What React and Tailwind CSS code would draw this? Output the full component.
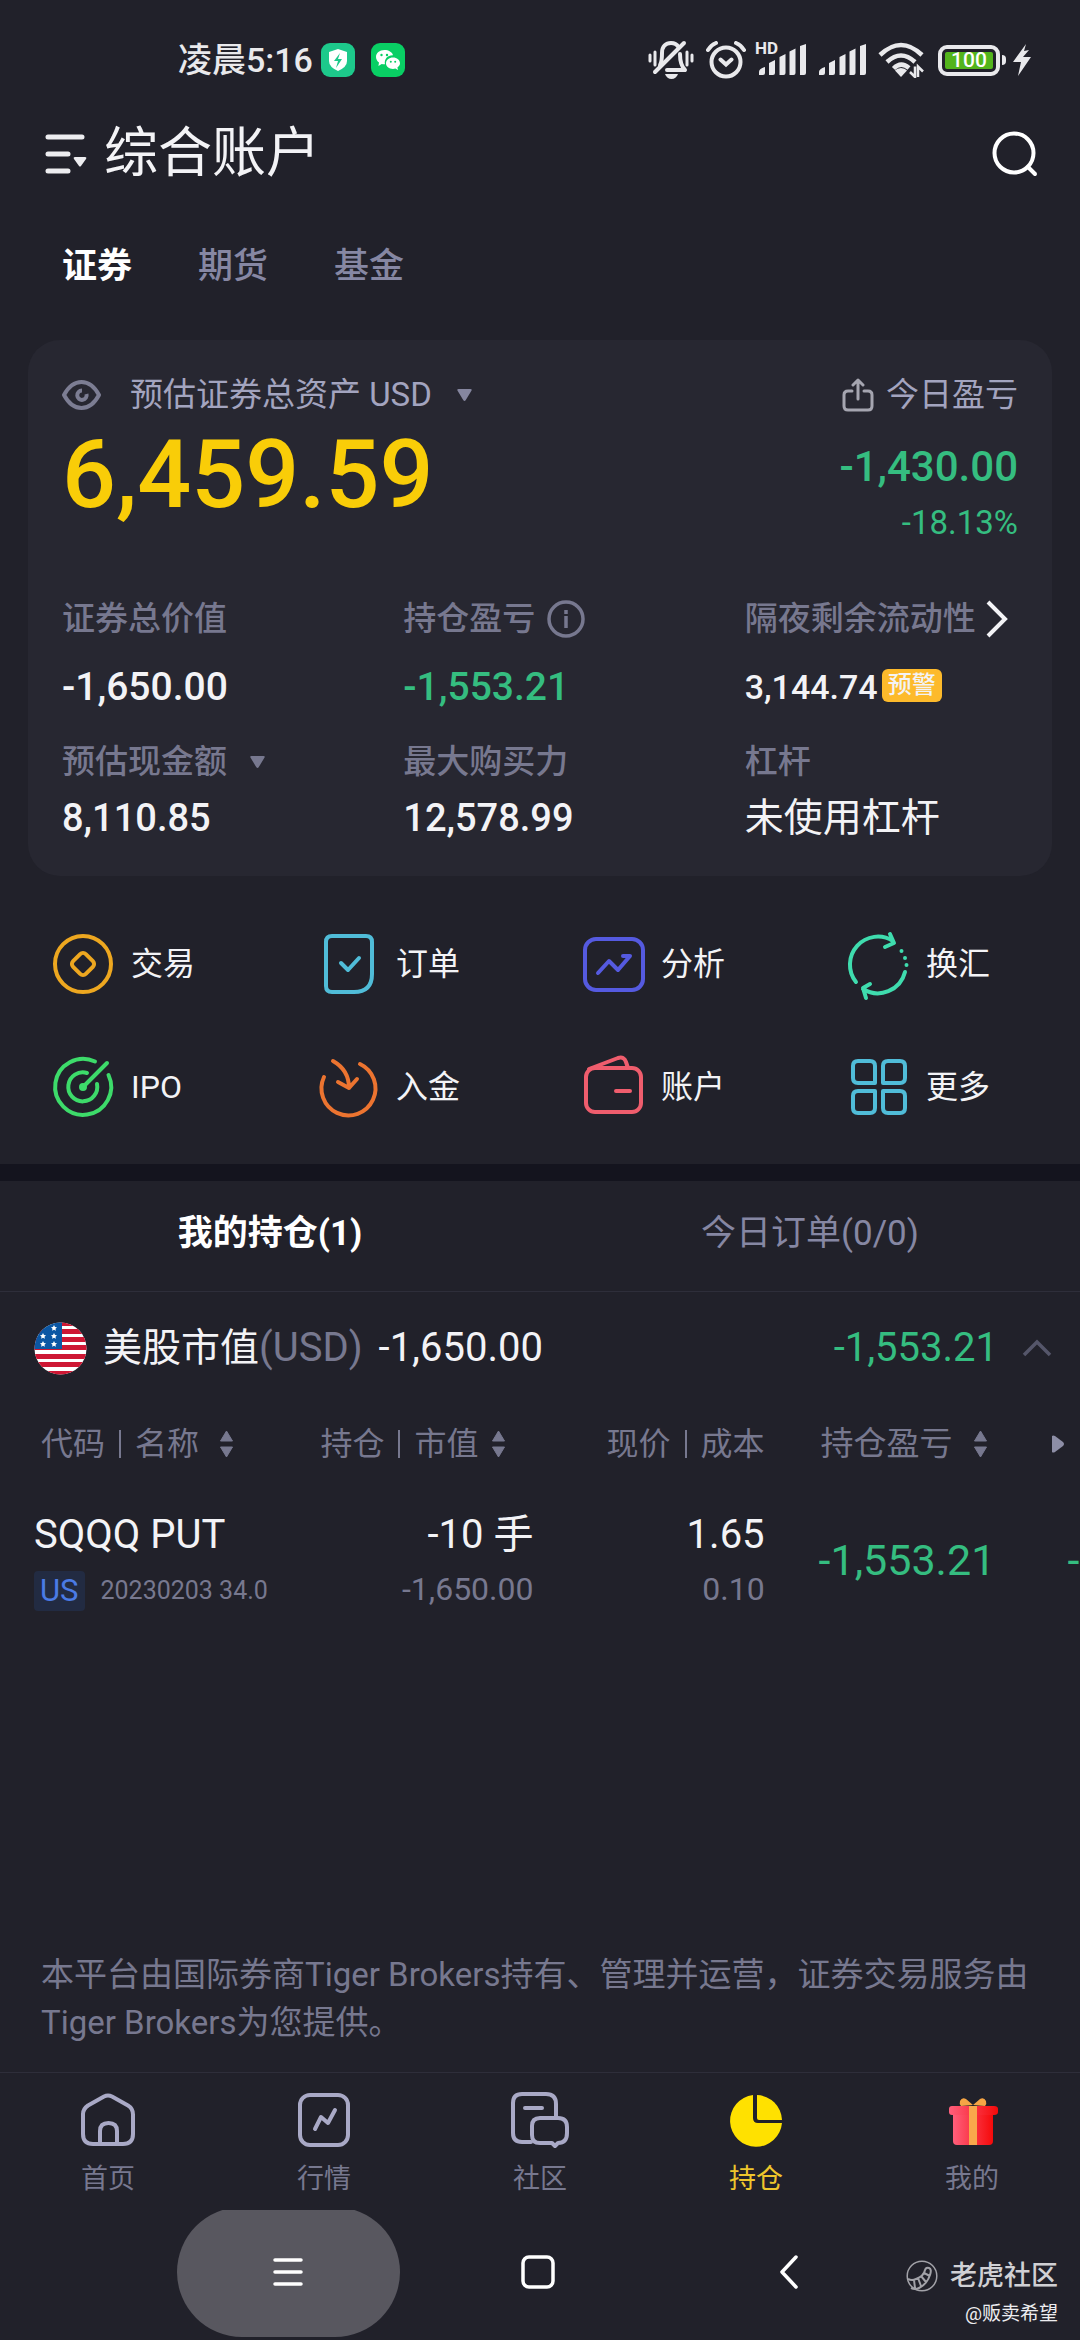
const Seta = ({ className = "" }) => (
  <svg className={className} width="17" height="14" viewBox="0 0 17 14" fill="currentColor">
    <path d="M2.5 1h12q2 0 .9 1.8L9.800 12q-1.300 1.800-2.600 0L1.600 2.800Q.5 1 2.500 1z" />
  </svg>
);

const Ordenar = () => (
  <svg width="15" height="28" viewBox="0 0 14 28" fill="currentColor">
    <path d="M7 1l6 10H1zM7 27L1 17h12z" stroke="currentColor" strokeWidth="1" strokeLinejoin="round" />
  </svg>
);

const Sinal = () => (
  <svg width="48" height="32" viewBox="0 0 48 32" fill="#e9e9ec">
    <path d="M1 31v-3q0-3 6-5v6q0 2-2 2zM11 31V19l6-3v13q0 2-2 2zM21.500 31V13l6-3v19q0 2-2 2zM31.500 31V7.500l6-3V29q0 2-2 2zM42 31V2l6-2v29q0 2-2 2z" />
  </svg>
);

const StatusBar = () => (
  <div className="flex h-[120px] items-center justify-between pr-12 pl-[178px]">
    <div className="flex items-center gap-4 text-[#e9e9ec]">
      <span className="-mr-2 text-[34px] leading-10 font-medium">凌晨5:16</span>
      <svg width="34" height="34" viewBox="0 0 34 34">
        <rect width="34" height="34" rx="9" fill="#1dc98b" />
        <path d="M17 6l9 3v9q0 6-9 10-9-4-9-10V9z" fill="#fff" />
        <path d="M19 10l-6 8h4l-2 7 6-9h-4z" fill="#1dc98b" />
      </svg>
      <svg width="34" height="34" viewBox="0 0 34 34">
        <rect width="34" height="34" rx="9" fill="#09cf64" />
        <path d="M13.500 7C8.500 7 5 10.200 5 14c0 2.200 1.200 4.200 3 5.500L7.400 23l3.300-2q1.800.4 3.300.3c-1.200-5.300 3-9.300 8-9C21.300 9 17.500 7 13.500 7z" fill="#fff" />
        <path d="M22 14.500c-4 0-7 2.600-7 5.800s3 5.700 7 5.700q1.200 0 2.400-.4l2.600 1.500-.6-2.500c1.600-1.200 2.600-2.600 2.600-4.300 0-3.200-3-5.800-7-5.800z" fill="#fff" />
        <g fill="#09cf64">
          <circle cx="10.500" cy="12" r="1.200" />
          <circle cx="16" cy="12" r="1.200" />
          <circle cx="19.800" cy="18.800" r="1" />
          <circle cx="24.200" cy="18.800" r="1" />
        </g>
      </svg>
    </div>

    <div className="flex items-center gap-3">
      <svg width="46" height="40" viewBox="0 0 46 40" fill="none" stroke="#e9e9ec" strokeWidth="4">
        <path d="M2 15v6M7 12v13M39 12v13M44 15v6" strokeWidth="3" strokeLinecap="round" />
        <path d="M12 25c2-3 2-6 2-12C14 6 18 3 23 3c4 0 6 1.500 7.500 4M32 14c0 8 1 12 5 16H19" strokeLinejoin="round" strokeLinecap="round" />
        <path d="M36 3L7 32" strokeLinecap="round" />
        <path d="M17 34h13q-2 5-6.500 5T17 34z" fill="#e9e9ec" stroke="none" />
      </svg>
      <svg width="40" height="38" viewBox="0 0 40 38" fill="none" stroke="#e9e9ec" strokeWidth="4" strokeLinecap="round">
        <circle cx="20" cy="21" r="14.500" />
        <path d="M2 9q3-5 8-7M38 9q-3-5-8-7M14.500 18.500l5.500 5 5.500-5" />
      </svg>
      <div className="relative">
        <Sinal />
        <span className="absolute -top-1 -left-[3px] text-[17px] leading-4 font-bold text-[#e9e9ec]">HD</span>
      </div>
      <Sinal />
      <svg width="48" height="36" viewBox="0 0 48 36" fill="none" stroke="#e9e9ec" strokeWidth="4.500">
        <path d="M2 13Q23-7 44 13M9 20Q23 7 37 20M15.500 26.500Q23 19 31 26" />
        <path d="M23 26q4 0 6 2.500L23 35l-6-6.500q2-2.500 6-2.500z" fill="#e9e9ec" stroke="none" />
        <path d="M37 24.500V35l-5-5M40 35V24.500l5 5" strokeWidth="2.500" />
      </svg>
      <div className="flex items-center gap-[2px]">
        <div className="flex h-[31px] w-[62px] rounded-[9px] border-4 border-[#e9e9ec] p-[3px]">
          <span className="flex w-full items-center justify-center rounded-[2px] bg-[#53b41c] text-[21px] leading-4 font-medium text-white">100</span>
        </div>
        <div className="h-[10px] w-1 rounded-r bg-[#e9e9ec]" />
        <svg className="ml-1" width="20" height="32" viewBox="0 0 20 32" fill="#e9e9ec">
          <path d="M14 0L1 18h8L6 32 19 13h-8l6-7-5 1z" />
        </svg>
      </div>
    </div>
  </div>
);

const acoes = [
  [
    {
      nome: "交易",
      cor: "text-[#eda720]",
      icone: (
        <>
          <circle cx="32" cy="32" r="28" />
          <rect x="23" y="23" width="18" height="18" rx="4" transform="rotate(45 32 32)" />
        </>
      ),
    },
    {
      nome: "订单",
      cor: "text-[#50bcd8]",
      icone: (
        <>
          <path d="M16 4h34q6 0 6 6v32Q56 60 38 60H16q-6 0-6-6V10q0-6 6-6z" />
          <path d="M25 31l7 7 11-12" />
        </>
      ),
    },
    {
      nome: "分析",
      cor: "text-[#555ae0]",
      icone: (
        <>
          <rect x="4" y="7" width="58" height="51" rx="11" />
          <path d="M17 41l11-12 9 9 12-14M42 24h7" />
        </>
      ),
    },
    {
      nome: "换汇",
      cor: "text-[#3fdcae]",
      icone: (
        <>
          <path d="M10 50A28 28 0 0 1 47 9M44 2l4 9-9 4M59 40A28 28 0 0 1 17 57M24 52l-7 4 3 10" />
          <path d="M55.500 19v.1M59 26v.1M60.500 33v.1" />
        </>
      ),
    },
  ],
  [
    {
      nome: "IPO",
      cor: "text-[#3ddb6a]",
      icone: (
        <>
          <path d="M44 6.500A28 28 0 1 0 57.500 20" />
          <path d="M36 18A14.500 14.500 0 1 0 46 29M34 30L56 8" />
          <circle cx="32" cy="32" r="2" fill="currentColor" />
        </>
      ),
    },
    {
      nome: "入金",
      cor: "text-[#ec7430]",
      icone: <path d="M8 22A27 27 0 1 0 44 9M17 6q16 9 16 27M22 27l11 6 8-9" />,
    },
    {
      nome: "账户",
      cor: "text-[#ef5d6d]",
      icone: (
        <>
          <rect x="5" y="13" width="55" height="44" rx="9" />
          <path d="M8 14L37 3q6-2 8 4l2 6M35 36h14" />
        </>
      ),
    },
    {
      nome: "更多",
      cor: "text-[#50bcd8]",
      icone: (
        <path d="M12 6h12q5 0 5 5v17H12q-5 0-5-5V11q0-5 5-5zM42 6h12q5 0 5 5v12q0 5-5 5H37V11q0-5 5-5zM12 36h17v17q0 5-5 5H12q-5 0-5-5V41q0-5 5-5zM37 36h17q5 0 5 5v12q0 5-5 5H42q-5 0-5-5z" />
      ),
    },
  ],
];

const abas = [
  {
    nome: "首页",
    icone: (
      <>
        <path d="M26 6.500q4-2 8 0l16 9q5 3 5 9V44q0 10-10 10H15Q5 54 5 44V24q0-5 5-8.500z" />
        <path d="M22 53V41q0-8 8.500-8T39 41v12" />
      </>
    ),
  },
  {
    nome: "行情",
    icone: (
      <>
        <rect x="6" y="5" width="48" height="50" rx="10" />
        <path d="M21 39l6-12 7 6 7-13" />
      </>
    ),
  },
  {
    nome: "社区",
    icone: (
      <>
        <path d="M21 52H12q-9 0-9-9V13q0-9 9-9h24q10 0 10 10v14" />
        <path d="M30 28h18q9 0 9 9v6q0 10-9 10l-3 3-3-3H30q-8 0-8-8v-9q0-8 8-8zM15 18h17" />
      </>
    ),
  },
  {
    nome: "持仓",
    ativa: true,
    icone: (
      <>
        <path d="M27 5v23q0 5 5 5h24A26 26 0 1 1 27 5z" fill="#ffe100" stroke="none" />
        <path d="M31 5a26 26 0 0 1 25 25H33q-2 0-2-2z" fill="#ffe100" stroke="none" />
      </>
    ),
  },
  {
    nome: "我的",
    icone: (
      <g stroke="none">
        <defs>
          <linearGradient id="caixa">
            <stop offset="0" stopColor="#ff5f7c" />
            <stop offset="1" stopColor="#f50a0a" />
          </linearGradient>
        </defs>
        <path d="M31 15l-7-6q-4-2-6 2-1 3 1 5zM31 15l7-6q4-2 6 2 1 3-1 5z" fill="#f5a545" />
        <path d="M11 24h40v27q0 4-4 4H15q-4 0-4-4z" fill="url(#caixa)" />
        <path d="M10 16h42q4 0 4 3v3q0 3-4 3H10q-3 0-3-3v-3q0-3 3-3z" fill="url(#caixa)" />
        <path d="M27 16h8v39h-8z" fill="#f9a84b" />
      </g>
    ),
  },
];

const rotulo = "flex h-10 items-center text-[33px] leading-10 text-[#77788f]";

const Resumo = () => (
  <section className="mx-7 mt-[51px] rounded-[32px] bg-[#272731] pt-[35px] pb-[34px]">
    <div className="flex justify-between px-[34px]">
      <div>
        <div className="flex h-10 items-center text-[33px] leading-10 text-[#a3a4bf]">
          <button type="button" aria-label="隐藏资产" className="mr-[29px]">
            <svg width="39" height="32" viewBox="0 0 39 32" fill="none" stroke="#7c7d93" strokeWidth="4">
              <path d="M2 16Q9 3 19.500 3T37 16Q30 29 19.500 29T2 16z" strokeLinejoin="round" />
              <path d="M20 11.500a4.700 4.700 0 1 0 4.500 3.500" />
            </svg>
          </button>
          <button type="button" className="flex items-center gap-6">
            预估证券总资产 USD
            <Seta className="text-[#85869f]" />
          </button>
        </div>
        <div className="mt-3 text-[95px] leading-[96px] font-medium text-[#f9cd08]">6,459.59</div>
      </div>
      <div className="text-right text-[#35bd80]">
        <button type="button" className="ml-auto flex h-10 items-center gap-3 text-[33px] leading-10 text-[#a3a4bf]">
          <svg width="32" height="34" viewBox="0 0 32 34" fill="none" stroke="#a5a5b0" strokeWidth="3" strokeLinecap="round" strokeLinejoin="round">
            <path d="M10 13H6q-4 0-4 4v11q0 4 4 4h20q4 0 4-4V17q0-4-4-4h-4M16 21V2M11 7l5-5 5 5" />
          </svg>
          今日盈亏
        </button>
        <div className="mt-7 text-[42px] leading-[48px] font-medium">-1,430.00</div>
        <div className="mt-3 text-[33px] leading-10">-18.13%</div>
      </div>
    </div>

    <div className="mt-14 grid grid-cols-3 text-[39px] leading-[48px] font-medium text-[#f3f3f6]">
      <div className="pl-[34px]">
        <div className={rotulo}>证券总价值</div>
        <div className="mt-6">-1,650.00</div>
      </div>
      <div className="pl-[34px]">
        <div className={rotulo}>
          持仓盈亏
          <svg className="ml-3" width="38" height="38" viewBox="0 0 38 38" fill="none" stroke="#77788f" strokeWidth="3.500">
            <circle cx="19" cy="19" r="17" />
            <path d="M19 16v12M19 10v4" />
          </svg>
        </div>
        <div className="mt-6 text-[#35bd80]">-1,553.21</div>
      </div>
      <div className="pl-[34px]">
        <button type="button" className={rotulo}>
          隔夜剩余流动性
          <svg className="ml-2" width="26" height="38" viewBox="0 0 26 38" fill="none" stroke="#f3f3f6" strokeWidth="4">
            <path d="M4 2l17 17L4 36" />
          </svg>
        </button>
        <div className="mt-6 flex items-center text-[34px]">
          3,144.74
          <span className="mb-1 ml-1 rounded-md bg-[#fdba2b] px-[6px] text-[24px] leading-[33px]">预警</span>
        </div>
      </div>
    </div>

    <div className="mt-[31px] grid grid-cols-3 text-[38px] leading-[48px] font-medium text-[#f3f3f6]">
      <div className="pl-[34px]">
        <button type="button" className={rotulo}>
          预估现金额
          <Seta className="ml-[22px]" />
        </button>
        <div className="mt-3">8,110.85</div>
      </div>
      <div className="pl-[34px]">
        <div className={rotulo}>最大购买力</div>
        <div className="mt-3">12,578.99</div>
      </div>
      <div className="pl-[34px]">
        <div className={rotulo}>杠杆</div>
        <div className="mt-3 text-[39px] font-normal">未使用杠杆</div>
      </div>
    </div>
  </section>
);

const Par = ({ a, b }) => (
  <span className="flex items-center gap-[14px]">
    {a}
    <span className="h-7 w-[2px] bg-[#77788f]" />
    {b}
  </span>
);

const Posicoes = () => (
  <section>
    <div className="flex h-[112px] items-center justify-between pr-7 pl-[34px] text-[40px] text-[#f3f3f6]">
      <div className="flex items-center">
        <svg width="53" height="53" viewBox="0 0 53 53">
          <clipPath id="bandeira">
            <circle cx="26.500" cy="26.500" r="26" />
          </clipPath>
          <g clipPath="url(#bandeira)">
            <path d="M0 0h53v53H0z" fill="#fff" />
            <path d="M0 7h53v5H0zM0 15h53v5H0zM0 23h53v5H0zM0 32h53v5H0zM0 40h53v5H0zM26 0h27v4H26zM0 49h53v4H0z" fill="#ce1734" />
            <path d="M0 0h28v27H0z" fill="#0b57a4" />
            <path d="M20 3l1 2 2 .3-1.500 1.500.4 2-1.900-1-1.900 1 .4-2L17 5.300 19 5zM9 11l1 2 2 .3-1.500 1.500.4 2-1.900-1-1.900 1 .4-2L6 13.300 8 13zM20 11l1 2 2 .3-1.500 1.500.4 2-1.900-1-1.900 1 .4-2-1.500-1.500L19 13zM9 19l1 2 2 .3-1.500 1.500.4 2-1.900-1-1.900 1 .4-2L6 21.300 8 21zM20 19l1 2 2 .3-1.500 1.500.4 2-1.900-1-1.900 1 .4-2-1.500-1.500L19 21z" fill="#fff" />
          </g>
        </svg>
        <span className="ml-4 text-[39px]">美股市值</span>
        <span className="text-[40px] text-[#77788f]">(USD)</span>
        <span className="ml-4">-1,650.00</span>
      </div>
      <button type="button" aria-label="收起" className="flex items-center gap-6 text-[#35bd80]">
        -1,553.21
        <svg width="30" height="20" viewBox="0 0 30 20" fill="none" stroke="#55566a" strokeWidth="3.500">
          <path d="M2 17L15 4l13 13" />
        </svg>
      </button>
    </div>

    <table className="w-full table-fixed">
      <colgroup>
        <col className="w-[28%]" />
        <col className="w-[21.400%]" />
        <col className="w-[21.400%]" />
        <col className="w-[26%]" />
        <col />
      </colgroup>
      <thead>
        <tr className="h-20 text-[32px] whitespace-nowrap text-[#77788f]">
          <th className="pl-[41px] font-normal">
            <button type="button" className="flex items-center gap-5">
              <Par a="代码" b="名称" />
              <Ordenar />
            </button>
          </th>
          <th className="pr-7 font-normal">
            <button type="button" className="ml-auto flex items-center gap-3">
              <Par a="持仓" b="市值" />
              <Ordenar />
            </button>
          </th>
          <th className="font-normal">
            <div className="flex justify-end">
              <Par a="现价" b="成本" />
            </div>
          </th>
          <th className="pl-14 font-normal">
            <button type="button" className="flex items-center gap-5 text-[33px]">
              持仓盈亏
              <Ordenar />
            </button>
          </th>
          <th aria-label="更多列" className="pl-[6px]">
            <svg width="14" height="18" viewBox="0 0 14 18" fill="#8d8ea6">
              <path d="M1 1q1-1 3 0l8 6q2 2 0 4l-8 6q-2 1-3 0z" />
            </svg>
          </th>
        </tr>
      </thead>
      <tbody>
        <tr className="text-[40px] leading-[48px] whitespace-nowrap text-[#f3f3f6]">
          <td className="pt-[27px] pl-[34px]">
            <div>SQQQ PUT</div>
            <div className="mt-3 flex items-center gap-4">
              <span className="rounded-sm bg-[#222b42] px-[6px] text-[31px] leading-10 text-[#4b7be5]">US</span>
              <span className="text-[25px] leading-10 text-[#77788f]">20230203 34.0</span>
            </div>
          </td>
          <td className="pt-[27px] text-right">
            <div>-10 手</div>
            <div className="mt-2 text-[32px] leading-[44px] text-[#77788f]">-1,650.00</div>
          </td>
          <td className="pt-[27px] text-right">
            <div>1.65</div>
            <div className="mt-2 text-[32px] leading-[44px] text-[#77788f]">0.10</div>
          </td>
          <td className="pt-6 pl-[54px] text-[43px] text-[#35bd80]">-1,553.21</td>
          <td className="pt-6 pl-[22px] text-[43px] text-[#35bd80]">-</td>
        </tr>
      </tbody>
    </table>
  </section>
);

const App = () => {
  return (
    <div className="flex min-h-screen w-full flex-col overflow-hidden bg-[#21212a] font-['Roboto','Noto_Sans_CJK_SC',sans-serif]">
      <StatusBar />

      <header className="flex h-[68px] items-center justify-between pr-[42px] pl-[45px]">
        <button type="button" className="flex items-center gap-4 text-[54px] leading-[66px] text-[#f3f3f6]">
          <svg width="43" height="42" viewBox="0 0 43 42" fill="none" stroke="#ededf0" strokeWidth="5" strokeLinecap="round">
            <path d="M3 4h34M3 21h20M3 38h20" />
            <path d="M30 24h10q2 0 1 2l-5 7q-1 1-2 0l-5-7q-1-2 1-2z" fill="#ededf0" stroke="none" />
          </svg>
          综合账户
        </button>
        <button type="button" aria-label="搜索">
          <svg width="46" height="46" viewBox="0 0 46 46" fill="none" stroke="#fff" strokeWidth="4" strokeLinecap="round">
            <circle cx="22" cy="22" r="19.500" />
            <path d="M36 36l7 7" />
          </svg>
        </button>
      </header>

      <nav className="mt-[57px] flex gap-[66px] pl-[62px] text-[35px] leading-[44px] font-medium text-[#8687a3]">
        <button type="button" className="font-bold text-white">证券</button>
        <button type="button">期货</button>
        <button type="button">基金</button>
      </nav>

      <Resumo />

      <section className="mt-14 mb-[45px] flex flex-col gap-[59px] pr-[90px] pl-[51px]">
        {acoes.map((linha, i) => (
          <div key={i} className="flex justify-between">
            {linha.map((acao) => (
              <button key={acao.nome} type="button" className="flex h-16 w-36 items-center gap-4 text-[32px] text-[#f3f3f6]">
                <svg
                  className={`shrink-0 overflow-visible ${acao.cor}`}
                  width="64"
                  height="64"
                  viewBox="0 0 64 64"
                  fill="none"
                  stroke="currentColor"
                  strokeWidth="4"
                  strokeLinecap="round"
                  strokeLinejoin="round"
                >
                  {acao.icone}
                </svg>
                {acao.nome}
              </button>
            ))}
          </div>
        ))}
      </section>

      <div className="h-[17px] bg-[#14141e]" />

      <div className="grid h-[111px] grid-cols-2 border-b border-[#2e2e3a] pb-1 text-[35px]">
        <button type="button" className="font-bold text-white">我的持仓(1)</button>
        <button type="button" className="text-[#8687a3]">今日订单(0/0)</button>
      </div>

      <Posicoes />

      <p className="mt-auto pt-10 pr-[34px] pb-[25px] pl-[41px] text-[33px] leading-[48px] text-[#77788f]">
        本平台由国际券商Tiger Brokers持有、管理并运营，证券交易服务由Tiger Brokers为您提供。
      </p>

      <nav className="grid grid-cols-5 border-t border-[#2e2e3a] pt-[17px] pb-[13px]">
        {abas.map((aba) => (
          <button
            key={aba.nome}
            type="button"
            className={`flex flex-col items-center gap-[11px] text-[27px] leading-9 ${
              aba.ativa ? "text-[#eec62c]" : "text-[#77788f]"
            }`}
          >
            <svg
              width="60"
              height="60"
              viewBox="0 0 60 60"
              fill="none"
              stroke="#a9a9c6"
              strokeWidth="4"
              strokeLinecap="round"
              strokeLinejoin="round"
            >
              {aba.icone}
            </svg>
            {aba.nome}
          </button>
        ))}
      </nav>

      <div className="relative h-[130px] overflow-hidden">
        <div className="-mt-[3px] grid h-[130px] grid-cols-3 justify-items-center pr-[166px] pl-[163px]">
          <button type="button" aria-label="菜单" className="flex w-[223px] items-center justify-center rounded-full bg-[#58575f]">
            <svg width="30" height="30" viewBox="0 0 30 30" stroke="#fff" strokeWidth="3.500" strokeLinecap="round">
              <path d="M2 3h26M2 15h26M2 27h26" />
            </svg>
          </button>
          <button type="button" aria-label="主屏幕">
            <svg width="34" height="34" viewBox="0 0 34 34" fill="none" stroke="#fff" strokeWidth="3.500">
              <rect x="2" y="2" width="30" height="30" rx="6" />
            </svg>
          </button>
          <button type="button" aria-label="返回">
            <svg width="20" height="34" viewBox="0 0 20 34" fill="none" stroke="#fff" strokeWidth="3.500" strokeLinecap="round" strokeLinejoin="round">
              <path d="M17 2L3 17l14 15" />
            </svg>
          </button>
        </div>
        {/* marca d'água da comunidade */}
        <div className="absolute right-[22px] bottom-[14px] flex flex-col items-end text-[#d0d0d4]">
          <div className="flex items-center gap-3 text-[27px] leading-9 font-medium">
            <svg width="32" height="32" viewBox="0 0 32 32" fill="none" stroke="#a2a2a8" strokeWidth="1.500">
              <circle cx="16" cy="16" r="14.800" />
              <path d="M2 19q4 2 8 0 8-3 9-9 1-3 4-2 3 1 1 7-3 9-11 13-4 2-8 0M8 20l1 8M12 18l3 8M15 16l5 6M18 13l6 3" strokeWidth="2" />
            </svg>
            老虎社区
          </div>
          <div className="mt-2 text-[19px] leading-6 text-[#ededf0]">@贩卖希望</div>
        </div>
      </div>
    </div>
  );
};

export default App;
